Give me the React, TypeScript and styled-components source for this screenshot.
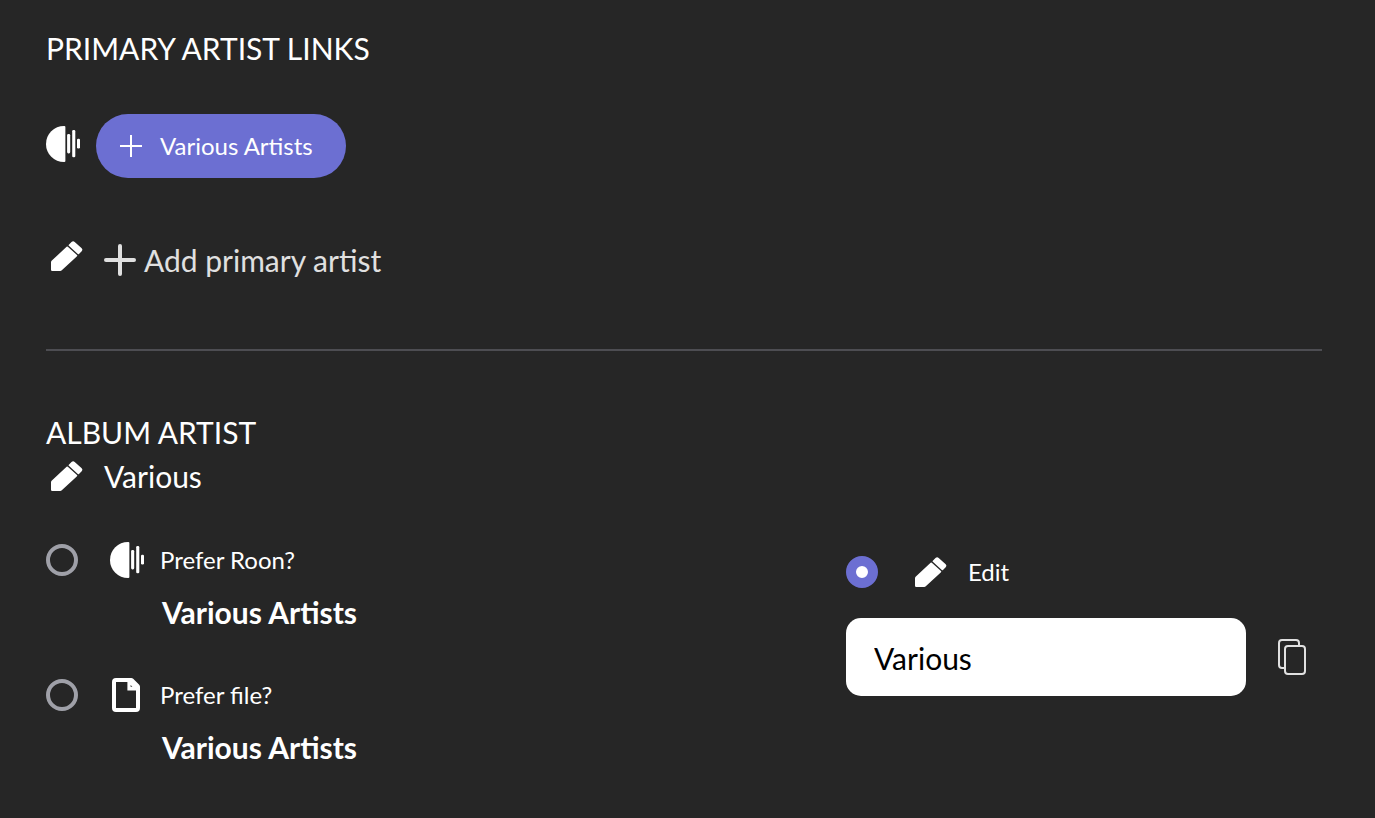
import React, { useState } from "react";
import styled, { createGlobalStyle } from "styled-components";

const GlobalStyle = createGlobalStyle`
  * { box-sizing: border-box; }
  body {
    margin: 0;
    background: #262626;
    color: #ffffff;
    font-family: Lato, "Liberation Sans", sans-serif;
  }
`;

const Page = styled.main`
  min-height: 100vh;
  padding: 30px 53px 54px 46px;
`;

const SectionTitle = styled.h2`
  margin: 0;
  font-size: 30px;
  line-height: 36px;
  font-weight: 400;
`;

const LinkRow = styled.div<{ $above: number }>`
  display: flex;
  align-items: center;
  margin-top: ${(p) => p.$above}px;
`;

const IconSlot = styled.span<{ $lift?: number }>`
  display: flex;
  flex: none;
  padding-bottom: ${(p) => p.$lift ?? 0}px;

  svg {
    display: block;
  }
`;

const ArtistPill = styled.button`
  display: flex;
  align-items: center;
  gap: 18px;
  height: 64px;
  margin-left: 10px;
  padding: 0 33px 0 24px;
  border: 0;
  border-radius: 32px;
  background: #6c6fd2;
  color: #ffffff;
  font: 400 24px/30px Lato, "Liberation Sans", sans-serif;
  cursor: pointer;
`;

const AddButton = styled.button`
  display: flex;
  align-items: center;
  gap: 8px;
  margin-left: 18px;
  padding: 0;
  border: 0;
  background: none;
  color: #e0e0e0;
  font: 400 30px/36px Lato, "Liberation Sans", sans-serif;
  cursor: pointer;
`;

const Divider = styled.hr`
  height: 2px;
  margin: 67px 0 63px;
  border: 0;
  background: #4d4d52;
`;

const CurrentValue = styled.div`
  display: flex;
  align-items: center;
  gap: 18px;
  margin-top: 8px;
  font-size: 30px;
  line-height: 36px;
`;

const Choices = styled.div`
  display: grid;
  grid-template-columns: minmax(0, 1fr) 476px;
  margin-top: 48px;
`;

const SourceColumn = styled.div`
  display: flex;
  flex-direction: column;
  gap: 47px;
`;

const EditColumn = styled.div`
  display: flex;
  flex-direction: column;
  gap: 28px;
  padding-top: 12px;
`;

const ChoiceLabel = styled.label<{ $gap: number }>`
  display: flex;
  align-items: center;
  font-size: 24px;
  line-height: 30px;
  cursor: pointer;

  ${IconSlot} {
    margin: 0 ${(p) => p.$gap}px 0 32px;
  }
`;

const Radio = styled.input`
  appearance: none;
  flex: none;
  width: 32px;
  height: 32px;
  margin: 0;
  border: 4px solid #9fa0a8;
  border-radius: 50%;
  cursor: pointer;

  &:checked {
    border: 10px solid #6c6fd2;
    background: #ffffff;
  }
`;

const SourceValue = styled.div`
  margin: 16px 0 0 116px;
  font-size: 30px;
  line-height: 36px;
  font-weight: 700;
`;

const EditLine = styled.div`
  display: flex;
  align-items: center;
  gap: 32px;
`;

const TextField = styled.input`
  width: 400px;
  height: 78px;
  padding: 2px 28px 0;
  border: 0;
  border-radius: 15px;
  background: #ffffff;
  color: #000000;
  font: 400 30px/36px Lato, "Liberation Sans", sans-serif;
`;

const CopyButton = styled.button`
  display: flex;
  padding: 0;
  border: 0;
  background: none;
  color: #e0e0e0;
  cursor: pointer;
`;

const RoonIcon = () => (
  <svg width="40" height="36" viewBox="0 0 40 36" fill="#fff" aria-hidden="true">
    <path d="M18 0H18.3Q19.4 0 19.4 1.1V34.9Q19.4 36 18.3 36H18A18 18 0 0 1 18 0Z" />
    <rect x="21.1" y="8" width="3.1" height="19.4" rx="1.3" />
    <rect x="26.2" y="4" width="3.1" height="27.2" rx="1.3" />
    <rect x="31" y="12.8" width="3" height="9.8" rx="1.3" />
  </svg>
);

const PencilIcon = () => (
  <svg width="40" height="36" viewBox="0 0 40 36" fill="#fff" aria-hidden="true">
    <path d="M5 24.2Q5 23.4 5.6 22.8L20.6 8.8Q21.2 8.2 21.8 8.8L31 17Q31.6 17.6 31 18.2L15.8 32.2Q15.1 32.9 14.2 32.9H6.2Q5 32.9 5 31.7Z" />
    <path d="M22.8 6.7L25.5 4.1Q27.1 2.7 28.7 4L35.7 10.3Q37.2 11.8 35.7 13.3L33 15.9Q32.4 16.4 31.8 15.9L22.8 7.8Q22.2 7.2 22.8 6.7Z" />
  </svg>
);

const FileIcon = () => (
  <svg width="40" height="36" viewBox="0 0 40 36" aria-hidden="true">
    <path
      fill="#fff"
      fillRule="evenodd"
      d="M6 1H21.3Q22.4 1 23.2 1.8L29.2 7.8Q30 8.6 30 9.7V31Q30 35 26 35H6Q2 35 2 31V5Q2 1 6 1ZM6 5V31H26V13.5H17.4V5ZM20.6 8V9.8H22.4Z"
    />
  </svg>
);

const PlusIcon = ({ size, weight, round }: { size: number; weight: number; round?: boolean }) => (
  <svg width={size} height={size} viewBox={`0 0 ${size} ${size}`} aria-hidden="true">
    <rect x={(size - weight) / 2} width={weight} height={size} rx={round ? weight / 2 : 0} fill="currentColor" />
    <rect y={(size - weight) / 2} width={size} height={weight} rx={round ? weight / 2 : 0} fill="currentColor" />
  </svg>
);

const CopyIcon = () => (
  <svg width="28" height="36" viewBox="0 0 28 36" fill="none" stroke="currentColor" strokeWidth="2" aria-hidden="true">
    <path d="M21 6V4Q21 1 18 1H4Q1 1 1 4V26Q1 29 4 29H6" />
    <rect x="7" y="7" width="20" height="28" rx="3" />
  </svg>
);

export default function App() {
  const [source, setSource] = useState("edit");
  const [artist, setArtist] = useState("Various");

  const radio = (value: string) => (
    <Radio
      type="radio"
      name="album-artist-source"
      value={value}
      checked={source === value}
      onChange={() => setSource(value)}
    />
  );

  return (
    <>
      <GlobalStyle />
      <Page>
        <section>
          <SectionTitle>PRIMARY ARTIST LINKS</SectionTitle>
          <LinkRow $above={48}>
            <IconSlot $lift={4}>
              <RoonIcon />
            </IconSlot>
            <ArtistPill type="button">
              <PlusIcon size={22} weight={2} />
              Various Artists
            </ArtistPill>
          </LinkRow>
          <LinkRow $above={60}>
            <IconSlot $lift={8}>
              <PencilIcon />
            </IconSlot>
            <AddButton type="button">
              <PlusIcon size={32} weight={4} round />
              Add primary artist
            </AddButton>
          </LinkRow>
        </section>
        <Divider />
        <section>
          <SectionTitle>ALBUM ARTIST</SectionTitle>
          <CurrentValue>
            <IconSlot>
              <PencilIcon />
            </IconSlot>
            {artist}
          </CurrentValue>
          <Choices>
            <SourceColumn>
              <div>
                <ChoiceLabel $gap={10}>
                  {radio("roon")}
                  <IconSlot>
                    <RoonIcon />
                  </IconSlot>
                  Prefer Roon?
                </ChoiceLabel>
                <SourceValue>Various Artists</SourceValue>
              </div>
              <div>
                <ChoiceLabel $gap={10}>
                  {radio("file")}
                  <IconSlot>
                    <FileIcon />
                  </IconSlot>
                  Prefer file?
                </ChoiceLabel>
                <SourceValue>Various Artists</SourceValue>
              </div>
            </SourceColumn>
            <EditColumn>
              <ChoiceLabel $gap={18}>
                {radio("edit")}
                <IconSlot>
                  <PencilIcon />
                </IconSlot>
                Edit
              </ChoiceLabel>
              <EditLine>
                <TextField
                  type="text"
                  aria-label="Album artist"
                  value={artist}
                  onChange={(e) => setArtist(e.target.value)}
                />
                <CopyButton type="button" aria-label="Copy">
                  <CopyIcon />
                </CopyButton>
              </EditLine>
            </EditColumn>
          </Choices>
        </section>
      </Page>
    </>
  );
}
